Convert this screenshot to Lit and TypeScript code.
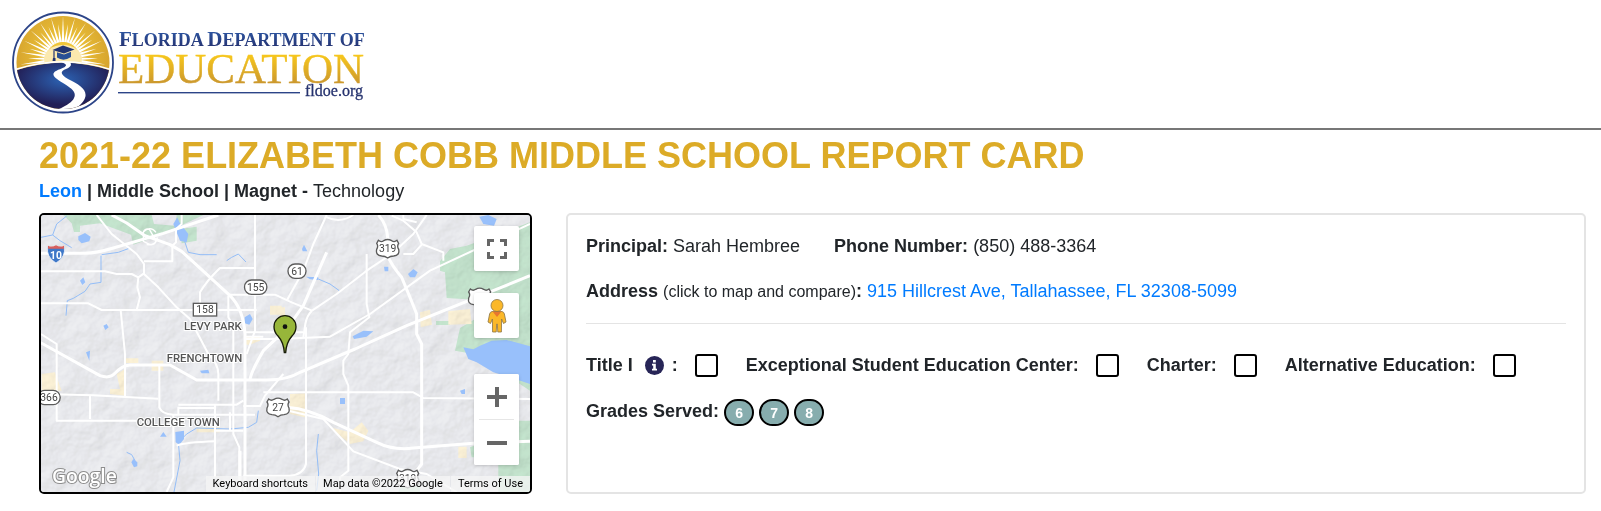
import { LitElement, html, css, svg } from "lit";
import { customElement, property, state } from "lit/decorators.js";

@customElement("doe-logo")
class DoeLogo extends LitElement {
  static styles = css`
    :host { display: block; }
    svg { display: block; }
    .serif { font-family: "Liberation Serif", serif; }
    .bold { font-weight: 700; }
  `;

  private rays() {
    const rays = [];
    for (let i = 0; i < 25; i++) {
      const a = Math.PI * (1.04 - (i * 1.08) / 24);
      const long = i % 2 === 0 ? 43 : 35;
      const x = Math.cos(a);
      const y = -Math.sin(a);
      rays.push(svg`<polygon fill="#fff" points="${63 + x * 17 - y * 1.3},${59 + y * 17 + x * 1.3} ${63 + x * long},${59 + y * long} ${63 + x * 17 + y * 1.3},${59 + y * 17 - x * 1.3}"/>`);
    }
    return rays;
  }

  render() {
    return html`
      <svg width="376" height="128" viewBox="0 0 376 128" role="img" aria-label="Florida Department of Education">
        <defs>
          <radialGradient id="sky" cx=".5" cy=".4" r=".6">
            <stop offset="0" stop-color="#f6cf3c" />
            <stop offset="1" stop-color="#cf9a2b" />
          </radialGradient>
          <radialGradient id="land" cx=".5" cy=".35" r=".5">
            <stop offset="0" stop-color="#2c63b4" />
            <stop offset="1" stop-color="#221f56" />
          </radialGradient>
          <linearGradient id="gold" x1="0" y1="0" x2="0" y2="1">
            <stop offset=".2" stop-color="#f8c81c" />
            <stop offset=".85" stop-color="#c9952e" />
          </linearGradient>
          <linearGradient id="blue" x1="0" y1="0" x2="0" y2="1">
            <stop offset="0" stop-color="#2f5fae" />
            <stop offset="1" stop-color="#232a66" />
          </linearGradient>
          <clipPath id="disc"><circle cx="63" cy="62.500" r="46.500" /></clipPath>
        </defs>
        <circle cx="63" cy="62.500" r="50" fill="#fff" stroke="#2c4488" stroke-width="1.800" />
        <g clip-path="url(#disc)">
          <rect x="14" y="14" width="98" height="98" fill="url(#sky)" />
          ${this.rays()}
          <ellipse cx="63" cy="59" rx="19" ry="14" fill="#fbe9ae" />
          <path d="M14 71Q38 63 63 62.500Q88 63 112 71V112H14Z" fill="url(#land)" />
          <path d="M14 70Q38 62 63 61.800Q88 62 112 70" fill="none" stroke="#fff" stroke-width="1.600" />
          <path d="M61 62H70C72 65 71 67 66 69C60 71.500 60 74 68 79C79 84 88 90 85 98C83 104 76 109 66 112H52C64 107 72 103 74 98C77 92 71 88 63 83C55 78 51 75 55 71.500C59 69 65 68 66 65.500C66 63.500 63 63 61 62Z" fill="#fff" />
        </g>
        <path d="M52.500 50L63 45.600L74.500 49.500L64 53.600Z" fill="#223572" />
        <path d="M57 52.300V57.500Q63.500 62 71 57V51.800L64 54.600Z" fill="#2a5095" />
        <path d="M54 50.500V59" stroke="#223572" stroke-width="1.200" />
        <path d="M53 58H55.500V61H52.500Z" fill="#223572" />
        <text class="serif bold" x="119" y="46" font-size="18" fill="url(#blue)"><tspan font-size="21">F</tspan>LORIDA <tspan font-size="21">D</tspan>EPARTMENT OF</text>
        <text class="serif" x="118" y="83" font-size="43" fill="url(#gold)" stroke="url(#gold)" stroke-width=".4">EDUCATION</text>
        <rect x="118" y="92" width="182" height="1.400" fill="#2c4488" />
        <text class="serif" x="305" y="96" font-size="16" fill="#26336f" stroke="#26336f" stroke-width=".3">fldoe.org</text>
      </svg>
    `;
  }
}

@customElement("school-map")
class SchoolMap extends LitElement {
  static styles = css`
    :host {
      display: block;
      position: relative;
      min-height: 277px;
      border: 2px solid #000;
      border-radius: 5px;
      overflow: hidden;
      background: #e8eaed;
      font-family: Roboto, sans-serif;
    }
    .canvas { position: absolute; inset: 0; width: 100%; height: 100%; }
    .blend { mix-blend-mode: multiply; }
    .controls {
      position: absolute;
      top: 11px;
      right: 11px;
      bottom: 27px;
      display: flex;
      flex-direction: column;
      gap: 22px;
      width: 45px;
    }
    button { font: inherit; border: 0; padding: 0; cursor: pointer; }
    .tile {
      display: flex;
      align-items: center;
      justify-content: center;
      width: 45px;
      height: 45px;
      background: #fff;
      border-radius: 2px;
    }
    .controls > .tile, .zoom { box-shadow: 0 1px 4px -1px rgba(0, 0, 0, 0.3); }
    .zoom { margin-top: auto; background: #fff; border-radius: 2px; }
    .rule { height: 1px; margin: 0 5px; background: #e6e6e6; }
    .legal {
      position: absolute;
      right: 0;
      bottom: 0;
      display: flex;
      gap: 1px;
      font-size: 11px;
      line-height: 16px;
      color: #000;
    }
    .legal > * {
      padding: 0 7px;
      background: rgba(245, 245, 245, 0.75);
      color: #000;
      text-decoration: none;
      white-space: nowrap;
    }
    .place { font-size: 34px; font-weight: 500; fill: #555; stroke: #fff; stroke-width: 6px; paint-order: stroke; }
    .num { font-size: 31px; fill: #444; text-anchor: middle; }
    .brand { font-size: 58px; font-weight: 600; fill: #fff; stroke: #8d8d8d; stroke-width: 6px; paint-order: stroke; font-family: "Open Sans", sans-serif; }
  `;

  private readonly majorRoads = [
    "M33 148H165Q200 147 250 132L400 88L565 33",
    "M245 33L290 57L345 95L420 122L455 142L600 275Q640 315 645 390V864",
    "M30 415L210 515Q240 525 255 508Q275 485 300 483H420L500 528H700Q770 530 810 505L975 435L1130 365L1500 215",
    "M890 145L820 305L770 375L700 440Q665 500 660 525",
    "M1045 33Q1070 60 1073 100V155Q1085 185 1115 220L1140 280L1160 330V390L1175 420V780L1160 800",
    "M770 610Q840 615 910 655L1040 715Q1090 740 1150 732L1330 718L1500 712",
    "M630 740V864"
  ];

  private readonly mediumRoads = [
    "M200 33L245 90L320 150L342 180V210L385 250L440 310L480 345L535 450Q565 480 565 510V590",
    "M33 202H225L260 210H305L325 220L342 208",
    "M33 298H175L215 318H680",
    "M455 33V60L438 75V115L427 125V172H342",
    "M325 220L322 250L330 280L320 318",
    "M272 318L285 450V578",
    "M675 33V380L650 450",
    "M675 192H570Q530 230 510 265V330",
    "M600 272H735L785 295L846 320",
    "M595 275V340L610 365V690L628 730V864",
    "M890 33L850 120L820 200L770 290",
    "M846 320L920 270L1010 200L1085 150L1150 90L1190 33",
    "M1085 35L1120 50L1160 85L1175 120L1240 145V170",
    "M1120 33V45L1160 55M885 38Q930 60 970 33M1120 150H1150L1175 122",
    "M740 405L900 398L1020 330L1200 200L1500 60",
    "M1010 150Q1010 160 1010 300L1018 340L960 385L955 450L940 470V510L955 545V800L930 820V864",
    "M33 390L80 420V650H320",
    "M33 570L190 574L385 584M180 575V645",
    "M388 484V610Q395 630 430 632H675",
    "M430 632V820L410 864M440 725Q465 715 555 712",
    "M445 608V632M445 602H620L640 590M445 612H555M555 600V820",
    "M555 680H640M640 606H690L705 575L760 510",
    "M700 565H1150L1180 582L1500 585",
    "M828 370V780Q820 812 780 815H640",
    "M820 400L826 360Q830 335 846 320",
    "M775 620L880 645L970 742L1110 795L1190 810L1280 864",
    "M645 385H820M645 398H700M645 405H740M600 625V680"
  ];

  private readonly lakes = [
    "M1300 430L1330 436L1350 425L1385 410L1430 408L1500 427V540L1440 520L1390 505L1340 475L1315 465Z",
    "M145 97L165 87L182 98L178 112L155 118L145 108Z",
    "M436 684L462 680V705L448 722L437 715Z",
    "M968 397L1000 380L1030 382L1010 398L972 405Z",
    "M1348 38L1375 33L1400 45L1392 65L1360 60Z",
    "M1134 210L1150 195L1163 205L1155 220H1140Z",
    "M644 340L660 330L668 345L658 362L644 358Z",
    "M150 230L160 220L166 235L157 243Z",
    "M430 60L442 40L448 55L475 90L470 115L450 110Z",
    "M304 775L310 765L322 775V787L312 790Z",
    "M220 365L230 360L236 370L226 378Z",
    "M816 135L822 122L832 142H818Z",
    "M390 698L400 684L410 698Z",
    "M510 500L535 497L538 508H515Z",
    "M168 445L180 440L178 470Z",
    "M828 218L865 220V228L840 226Z",
    "M930 582H945V600H930Z",
    "M1290 560L1305 555V570H1295Z",
    "M1062 188H1075V202H1064Z"
  ];

  private readonly streams = [
    "M33 100L68 93L80 60L110 36M68 93L90 110L125 131",
    "M215 152L265 145L300 132M213 155V235L180 240L165 262L130 283L112 290L108 335",
    "M460 100L475 145L510 152H560M590 170L605 160L625 150L648 174",
    "M685 620L680 655L655 670L600 675L500 672L470 690L445 715L450 770L432 864",
    "M290 745L305 752L315 770M865 225L900 240L928 260",
    "M865 690L860 740L866 810L860 860"
  ];

  private shield(x: number, y: number, n: string) {
    return svg`<g transform="translate(${x} ${y})">
      <path d="M-28 -25Q-20 -18 -12 -24Q0 -31 12 -24Q20 -18 28 -25L33 -16Q27 -8 33 2Q37 20 18 22Q8 22 0 28Q-8 22 -18 22Q-37 20 -33 2Q-27 -8 -33 -16Z" fill="#fff" stroke="#5b5b5b" stroke-width="4"/>
      <text class="num" y="11">${n}</text></g>`;
  }

  private oval(x: number, y: number, w: number, n: string) {
    return svg`<rect x="${x - w / 2}" y="${y - 21}" width="${w}" height="43" rx="21" fill="#fff" stroke="#5b5b5b" stroke-width="4"/>
      <text class="num" x="${x}" y="${y + 11}">${n}</text>`;
  }

  render() {
    return html`
      <svg class="canvas" viewBox="33 33 1467 831" preserveAspectRatio="xMidYMid slice" role="img" aria-label="Map of Tallahassee showing the school">
        <defs>
          <filter id="relief" x="0" y="0" width="100%" height="100%" color-interpolation-filters="sRGB">
            <feTurbulence type="fractalNoise" baseFrequency=".014" numOctaves="4" seed="12" />
            <feDiffuseLighting surfaceScale="12" lighting-color="#fff"><feDistantLight azimuth="225" elevation="55" /></feDiffuseLighting>
          </filter>
        </defs>
        <rect x="33" y="33" width="1467" height="831" fill="#ebecf0" />
        <g fill="#bfe3ca">
          <path d="M100 33H365L372 60L435 65L440 33H520L400 90L310 122L303 92L210 58L150 65V84H132L125 58Z" />
          <path d="M450 75L500 68V110L455 118Z" />
          <path d="M1230 172L1260 135L1310 125L1380 100L1500 55V330H1440L1380 290L1250 282L1245 205L1230 200Z" />
          <path d="M1290 372L1370 325H1500V560L1410 500L1330 450L1275 440Z" />
          <path d="M1405 650H1500V864H1405ZM1320 730L1345 720V760H1325ZM1110 850L1170 840V864H1105Z" />
          <path d="M1218 351H1260V363H1218Z" />
        </g>
        <g fill="#fdf2d4">
          <path d="M720 305H755V332H720ZM645 395L690 398V410L660 422H645Z" />
          <path d="M1170 325L1200 317L1206 362L1172 370ZM1255 322L1320 315L1325 360L1255 362Z" />
          <path d="M285 463H325V477H285ZM260 510L285 495V575L240 570V555H270ZM35 510L75 505L95 560H35ZM365 470H400V500H365Z" />
          <path d="M780 570L825 568V640L780 630ZM900 670L960 685L995 655L1015 680L1000 712L960 720ZM1285 728H1310V762H1285Z" />
          <path d="M500 670H570V685H500ZM750 310H765V340H750Z" />
        </g>
        <rect class="blend" x="33" y="33" width="1467" height="831" filter="url(#relief)" opacity=".14" />
        <rect x="33" y="33" width="1467" height="831" fill="#fff" opacity=".1" />
        <g fill="none" stroke="#93bdf7" stroke-width="3">${this.streams.map((d) => svg`<path d="${d}"/>`)}</g>
        <g fill="#98c0fb">${this.lakes.map((d) => svg`<path d="${d}"/>`)}</g>
        <g fill="none" stroke="#fff" stroke-width="6" stroke-linejoin="round">${this.mediumRoads.map((d) => svg`<path d="${d}"/>`)}</g>
        <g fill="none" stroke="#fff" stroke-width="9" stroke-linejoin="round">${this.majorRoads.map((d) => svg`<path d="${d}"/>`)}</g>
        <path d="M340 112V85Q345 72 358 76L378 110Q375 124 360 122ZM335 90Q360 60 378 85M350 122Q380 125 382 100" fill="none" stroke="#fff" stroke-width="4" />

        <g transform="translate(78 149)">
          <path d="M-25 -22Q-12 -16 0 -23Q12 -16 25 -22Q30 10 0 28Q-30 10 -25 -22Z" fill="#3f78c8" stroke="#fff" stroke-width="2" />
          <path d="M-24 -24Q-12 -18 0 -25Q12 -18 24 -24V-15H-24Z" fill="#d8605e" />
          <text y="15" text-anchor="middle" font-size="31" font-weight="700" fill="#fff">10</text>
        </g>
        ${this.shield(1073, 134, "319")}
        ${this.shield(1349, 280, "")}
        ${this.shield(744, 610, "27")}
        ${this.shield(1133, 824, "319")}
        ${this.oval(801, 201, 54, "61")}
        ${this.oval(677, 249, 67, "155")}
        ${this.oval(57, 580, 67, "366")}
        <rect x="490" y="298" width="70" height="38" fill="#fff" stroke="#5b5b5b" stroke-width="4" />
        <text class="num" x="525" y="328">158</text>
        <text class="place" x="462" y="378">LEVY PARK</text>
        <text class="place" x="410" y="474">FRENCHTOWN</text>
        <text class="place" x="320" y="666">COLLEGE TOWN</text>
        <text class="brand" x="66" y="836">Google</text>
        <path d="M763 446Q761 415 744 396Q732 384 732 368A33 33 0 0 1 798 368Q798 384 786 396Q769 415 767 446Z" fill="#97b63a" stroke="#171b08" stroke-width="4" />
        <circle cx="765" cy="368" r="7" fill="#111" />
      </svg>

      <div class="controls">
        <button class="tile" aria-label="Toggle fullscreen view">
          <svg width="20" height="20" viewBox="0 0 20 20" fill="none" stroke="#666" stroke-width="3"><path d="M1.500 7V1.500H7M13 1.500H18.500V7M18.500 13V18.500H13M7 18.500H1.500V13" /></svg>
        </button>
        <button class="tile" aria-label="Drag Pegman onto the map to open Street View">
          <svg width="20" height="35" viewBox="0 0 20 35">
            <path d="M5 13.500H15Q17 14 17.400 16L19 24L16.500 25.500L14.600 21L14.400 34H10.800L10.300 26H9.700L9.200 34H5.600L5.400 21L3.500 25.500L1 24L2.600 16Q3 14 5 13.500Z" fill="#fbb829" stroke="#8a7444" stroke-width=".8" />
            <path d="M5.500 13.500H14.500L10 19Z" fill="#e8772e" />
            <circle cx="10" cy="7.500" r="6" fill="#fbb829" stroke="#8a7444" stroke-width=".8" />
          </svg>
        </button>
        <div class="zoom">
          <button class="tile" aria-label="Zoom in">
            <svg width="20" height="20" viewBox="0 0 20 20"><path d="M8 0H12V8H20V12H12V20H8V12H0V8H8Z" fill="#666" /></svg>
          </button>
          <div class="rule"></div>
          <button class="tile" aria-label="Zoom out">
            <svg width="20" height="20" viewBox="0 0 20 20"><path d="M0 8H20V12H0Z" fill="#666" /></svg>
          </button>
        </div>
      </div>
      <div class="legal">
        <button>Keyboard shortcuts</button>
        <span>Map data ©2022 Google</span>
        <a href="#terms">Terms of Use</a>
      </div>
    `;
  }
}

@customElement("school-details")
class SchoolDetails extends LitElement {
  @property({ type: Array }) grades: number[] = [6, 7, 8];
  @state() private flags = [
    { id: "ese", label: "Exceptional Student Education Center:" },
    { id: "charter", label: "Charter:" },
    { id: "alternative", label: "Alternative Education:" }
  ];

  static styles = css`
    :host {
      display: block;
      box-sizing: border-box;
      padding: 18px;
      border: 2px solid #e4e4e4;
      border-radius: 5px;
    }
    .facts { display: flex; flex-wrap: wrap; gap: 0 34px; }
    .line { line-height: 27px; }
    .address { margin-top: 18px; }
    .small { font-size: 16px; }
    a { color: #007bff; text-decoration: none; }
    hr { margin: 18px 0 28px; border: 0; border-top: 1px solid #e4e4e4; }
    .flags { display: flex; flex-wrap: wrap; gap: 12px 28px; }
    .flag { display: flex; align-items: center; gap: 17px; font-weight: 700; line-height: 27px; }
    .title-one { display: flex; align-items: center; gap: 8px; }
    .info { display: flex; padding: 0 0 0 4px; border: 0; background: none; }
    input {
      appearance: none;
      width: 23px;
      height: 23px;
      margin: 0;
      border: 2px solid #000;
      border-radius: 3px;
      background: #fff;
    }
    .grades { display: flex; align-items: center; gap: 5px; margin-top: 20px; line-height: 24px; }
    .grades b { padding-bottom: 3px; }
    .badge {
      box-sizing: border-box;
      width: 30px;
      height: 27px;
      border: 2px solid #000;
      border-radius: 14px;
      background: #87adae;
      color: #fff;
      font-size: 14px;
      font-weight: 700;
      text-align: center;
    }
  `;

  render() {
    return html`
      <div class="facts">
        <div class="line"><b>Principal:</b> Sarah Hembree</div>
        <div class="line"><b>Phone Number:</b> (850) 488-3364</div>
      </div>
      <div class="line address">
        <b>Address</b> <span class="small">(click to map and compare)</span><b>:</b>
        <a href="#map">915 Hillcrest Ave, Tallahassee, FL 32308-5099</a>
      </div>
      <hr />
      <div class="flags">
        <div class="flag">
          <div class="title-one">
            <label for="title1">Title I</label>
            <button class="info" aria-label="About Title I">
              <svg width="19" height="19" viewBox="0 0 19 19">
                <circle cx="9.500" cy="9.500" r="9.500" fill="#272557" />
                <path d="M8 4H10.800V6.600H8ZM7 7.800H10.800V12.800H12V14.600H7V12.800H8.200V9.600H7Z" fill="#fff" />
              </svg>
            </button>
            <span>:</span>
          </div>
          <input id="title1" type="checkbox" />
        </div>
        ${this.flags.map(
          (f) => html`<div class="flag"><label for=${f.id}>${f.label}</label><input id=${f.id} type="checkbox" /></div>`
        )}
      </div>
      <div class="grades">
        <b>Grades Served:</b>
        ${this.grades.map((g) => html`<span class="badge">${g}</span>`)}
      </div>
    `;
  }
}

@customElement("app-root")
class AppRoot extends LitElement {
  static styles = css`
    :host {
      display: block;
      background: #fff;
      color: #212529;
      font-family: "Liberation Sans", Arial, sans-serif;
      font-size: 18px;
    }
    header { border-bottom: 2px solid #777; }
    main { padding: 4px 15px 16px 39px; }
    h1 { margin: 0; color: #dcab27; font-size: 36px; line-height: 44px; font-weight: 700; }
    .meta { margin: 0; line-height: 26px; }
    .meta a { color: #007bff; text-decoration: none; }
    .columns {
      display: grid;
      grid-template-columns: minmax(0, 29fr) minmax(0, 60fr);
      gap: 34px;
      margin-top: 9px;
    }
  `;

  render() {
    return html`
      <header><doe-logo></doe-logo></header>
      <main>
        <h1>2021-22 ELIZABETH COBB MIDDLE SCHOOL REPORT CARD</h1>
        <p class="meta"><b><a href="#leon">Leon</a> | Middle School | Magnet - </b>Technology</p>
        <div class="columns">
          <school-map></school-map>
          <school-details></school-details>
        </div>
      </main>
    `;
  }
}
